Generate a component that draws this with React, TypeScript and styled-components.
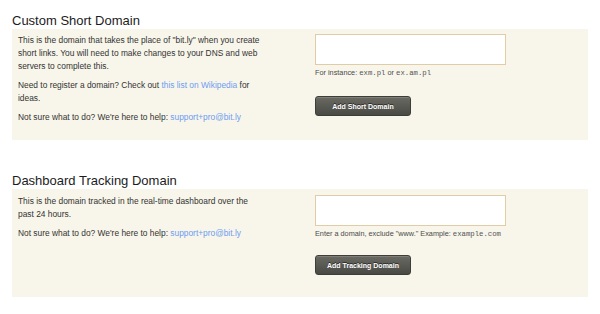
import React from "react";
import styled, { createGlobalStyle } from "styled-components";

const Global = createGlobalStyle`
  html, body { margin: 0; padding: 0; background: #ffffff; }
  body { font-family: "Liberation Sans", Arial, Helvetica, sans-serif; }
`;

const Page = styled.div`
  width: 600px;
  padding: 13px 12px 0 12px;
  box-sizing: border-box;
`;

const Section = styled.section`
  margin-bottom: 33px;
  &:last-child {
    margin-bottom: 0;
  }
`;

const Title = styled.h2`
  margin: 0;
  font-size: 13px;
  line-height: 16px;
  font-weight: normal;
  color: #1c1c1c;
`;

const Panel = styled.div<{ $height: number; $top: number }>`
  display: flex;
  width: 576px;
  height: ${(p) => p.$height}px;
  box-sizing: border-box;
  padding-top: ${(p) => p.$top}px;
  background: #f8f6ea;
`;

const Info = styled.div`
  width: 247px;
  padding-left: 6px;
  flex: none;
`;

const Para = styled.p`
  margin: 0 0 6px 0;
  font-size: 8.4px;
  line-height: 13px;
  color: #333333;
`;

const Link = styled.a`
  color: #6e9cf2;
  text-decoration: none;
`;

const Form = styled.div`
  margin-left: 50px;
  display: flex;
  flex-direction: column;
  align-items: flex-start;
`;

const Field = styled.input`
  width: 191px;
  height: 31px;
  box-sizing: border-box;
  border: 1px solid #e2cca6;
  background: #ffffff;
  margin: 0;
  padding: 0 4px;
  outline: none;
`;

const Hint = styled.div`
  margin-top: 2px;
  font-size: 7.3px;
  line-height: 11px;
  color: #4a4a4a;
`;

const Code = styled.code`
  font-family: "Liberation Mono", "Courier New", monospace;
  font-size: 7.3px;
  color: #555555;
`;

const Button = styled.button<{ $gap: number }>`
  margin-top: ${(p) => p.$gap}px;
  width: 96px;
  height: 20px;
  box-sizing: border-box;
  border: 1px solid #3e3e39;
  border-radius: 3px;
  background: linear-gradient(#6a6a63, #4a4a45);
  box-shadow: inset 0 1px 0 rgba(255, 255, 255, 0.15);
  color: #ffffff;
  font-family: "Liberation Sans", Arial, sans-serif;
  font-size: 7px;
  font-weight: bold;
  text-shadow: 0 -1px 0 #2a2a27;
  padding: 0;
  cursor: pointer;
`;

export default function App() {
  return (
    <Page>
      <Global />
      <Section>
        <Title>Custom Short Domain</Title>
        <Panel $height={111} $top={5}>
          <Info>
            <Para>
              This is the domain that takes the place of "bit.ly" when you create short links. You will
              need to make changes to your DNS and web servers to complete this.
            </Para>
            <Para>
              Need to register a domain? Check out <Link href="#">this list on Wikipedia</Link> for ideas.
            </Para>
            <Para>
              Not sure what to do? We're here to help: <Link href="#">support+pro@bit.ly</Link>
            </Para>
          </Info>
          <Form>
            <Field type="text" />
            <Hint>
              For instance: <Code>exm.pl</Code> or <Code>ex.am.pl</Code>
            </Hint>
            <Button $gap={17}>Add Short Domain</Button>
          </Form>
        </Panel>
      </Section>
      <Section>
        <Title>Dashboard Tracking Domain</Title>
        <Panel $height={108} $top={6}>
          <Info>
            <Para>This is the domain tracked in the real-time dashboard over the past 24 hours.</Para>
            <Para>
              Not sure what to do? We're here to help: <Link href="#">support+pro@bit.ly</Link>
            </Para>
          </Info>
          <Form>
            <Field type="text" />
            <Hint>
              Enter a domain, exclude "www." Example: <Code>example.com</Code>
            </Hint>
            <Button $gap={15}>Add Tracking Domain</Button>
          </Form>
        </Panel>
      </Section>
    </Page>
  );
}
